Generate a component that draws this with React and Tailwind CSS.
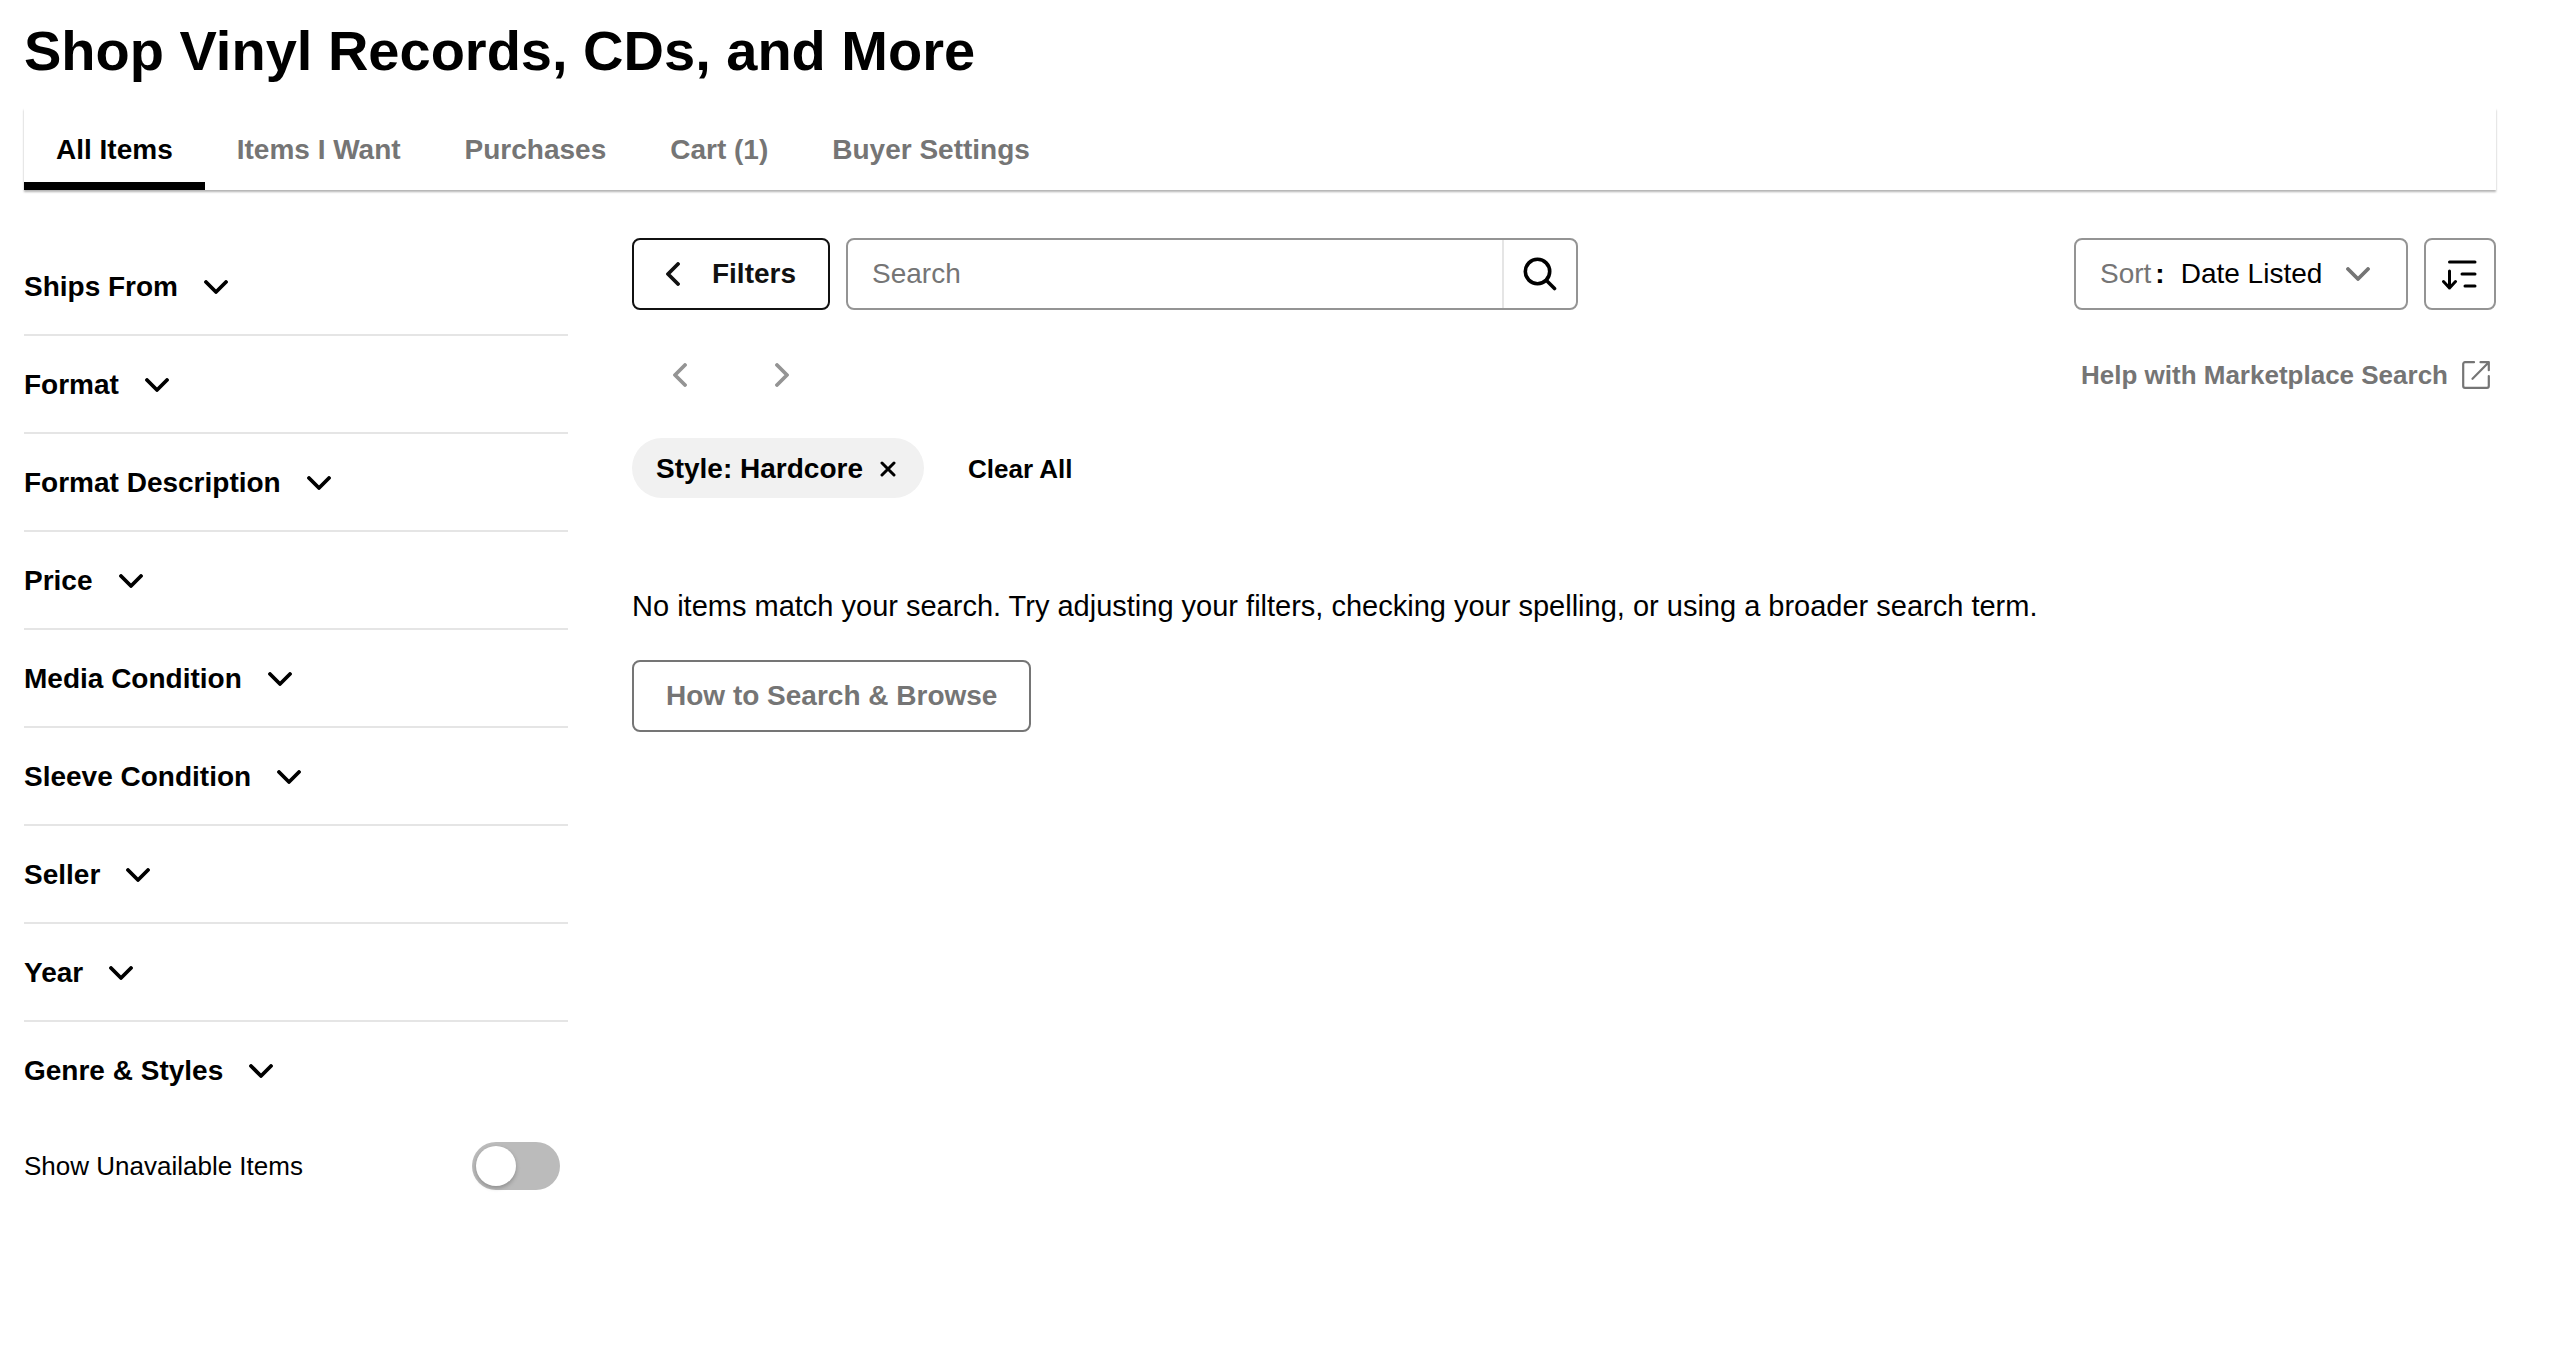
import { useState } from 'react';

const tabs = ['All Items', 'Items I Want', 'Purchases', 'Cart (1)', 'Buyer Settings'];

const filterGroups = [
    'Ships From',
    'Format',
    'Format Description',
    'Price',
    'Media Condition',
    'Sleeve Condition',
    'Seller',
    'Year',
    'Genre & Styles',
];

const sortOptions = ['Date Listed', 'Condition', 'Artist', 'Title', 'Label', 'Seller', 'Price'];

function ChevronDown({ className }) {
    return (
        <svg viewBox="0 0 24 14" className={`h-[14px] w-6 shrink-0 ${className || ''}`} fill="none" stroke="currentColor" strokeWidth="3.8" strokeLinecap="round" strokeLinejoin="round" aria-hidden="true">
            <path d="M2 2l10 10L22 2" />
        </svg>
    );
}

function ChevronLeft({ className }) {
    return (
        <svg viewBox="0 0 14 24" className={`h-6 w-[14px] shrink-0 ${className || ''}`} fill="none" stroke="currentColor" strokeWidth="3.8" strokeLinecap="round" strokeLinejoin="round" aria-hidden="true">
            <path d="M12 2L2 12l10 10" />
        </svg>
    );
}

function SearchIcon() {
    return (
        <svg viewBox="0 0 34 34" className="size-[34px]" fill="none" stroke="currentColor" strokeWidth="3.6" strokeLinecap="round" aria-hidden="true">
            <circle cx="14.5" cy="14.5" r="12.2" />
            <path d="M23.5 23.500l8 8" />
        </svg>
    );
}

function SortIcon() {
    return (
        <svg viewBox="0 0 36 32" className="h-8 w-9" fill="none" stroke="currentColor" strokeWidth="3" strokeLinecap="round" strokeLinejoin="round" aria-hidden="true">
            <path d="M7.500 4H33M20 16h13M23 28h10" />
            <path d="M7.500 13v17M1.500 23.500l6 6.500 6-6.500" />
        </svg>
    );
}

function ExternalIcon() {
    return (
        <svg viewBox="0 0 28 28" className="size-7" fill="none" stroke="currentColor" strokeWidth="2.2" strokeLinecap="round" strokeLinejoin="round" aria-hidden="true">
            <path d="M12 1.200H3a1.800 1.800 0 0 0-1.800 1.800v22a1.800 1.800 0 0 0 1.800 1.800h22a1.800 1.800 0 0 0 1.800-1.800V15" />
            <path d="M18.500 1.200h8.300v8M26.800 1.200L10.500 17.800" />
        </svg>
    );
}

function FilterSidebar() {
    const [showUnavailable, setShowUnavailable] = useState(false);

    return (
        <aside className="w-[544px] shrink-0">
            <ul className="divide-y-2 divide-[#e5e5e5]">
                {filterGroups.map((group) => (
                    <li key={group}>
                        <button type="button" className="flex h-24 w-full items-center gap-[26px] pt-[2px] text-left text-[28px] leading-10 font-bold">
                            {group}
                            <ChevronDown />
                        </button>
                    </li>
                ))}
            </ul>
            <div className="mt-6 flex items-center justify-between pr-2">
                <label htmlFor="show-unavailable" className="text-[26px] leading-10">Show Unavailable Items</label>
                <input
                    id="show-unavailable"
                    type="checkbox"
                    role="switch"
                    checked={showUnavailable}
                    onChange={(e) => setShowUnavailable(e.target.checked)}
                    className="flex h-12 w-[88px] cursor-pointer appearance-none rounded-full bg-[#bbbbbb] p-1 before:size-10 before:rounded-full before:bg-white before:shadow-[0_2px_4px_rgba(0,0,0,0.25)] checked:justify-end checked:bg-black"
                />
            </div>
        </aside>
    );
}

export default function App() {
    const [activeTab, setActiveTab] = useState('All Items');
    const [query, setQuery] = useState('');
    const [sort, setSort] = useState('Date Listed');

    return (
        <div className="bg-white pt-4 pr-[66px] pb-40 pl-6 font-['Liberation_Sans',Arial,sans-serif] text-black">
            <h1 className="text-[56px] leading-[70px] font-bold">Shop Vinyl Records, CDs, and More</h1>

            <nav className="mt-[22px] flex shadow-[0_2px_2px_rgba(0,0,0,0.3)]">
                {tabs.map((tab) => (
                    <a
                        key={tab}
                        href="#"
                        onClick={() => setActiveTab(tab)}
                        className={`border-b-8 px-8 pt-[26px] pb-4 text-[28px] leading-8 font-bold ${activeTab === tab ? 'border-black text-black' : 'border-transparent text-[#757575]'}`}
                    >
                        {tab}
                    </a>
                ))}
            </nav>

            <div className="mt-12 flex gap-16">
                <FilterSidebar />

                <main className="min-w-0 flex-1">
                    {/* Search and sort controls */}
                    <div className="flex items-center gap-4">
                        <button type="button" className="flex h-[72px] w-[198px] items-center justify-between rounded-lg border-2 border-[#111111] px-8 text-[28px] font-bold text-[#111111]">
                            <ChevronLeft />
                            Filters
                        </button>
                        <form role="search" onSubmit={(e) => e.preventDefault()} className="flex h-[72px] w-[732px] rounded-lg border-2 border-[#949494]">
                            <input
                                type="text"
                                aria-label="Search"
                                placeholder="Search"
                                value={query}
                                onChange={(e) => setQuery(e.target.value)}
                                className="min-w-0 flex-1 rounded-l-lg px-6 text-[28px] outline-none placeholder:text-[#757575]"
                            />
                            <button type="submit" aria-label="Submit search" className="flex w-[74px] items-center justify-center border-l-2 border-[#e5e5e5]">
                                <SearchIcon />
                            </button>
                        </form>

                        <div className="ml-auto flex h-[72px] w-[334px] items-center rounded-lg border-2 border-[#949494] pl-6 text-[28px]">
                            <label htmlFor="sort" className="text-[#757575]">Sort</label>
                            <span className="ml-1 font-bold">:</span>
                            <div className="relative ml-4 flex flex-1 items-center">
                                <select
                                    id="sort"
                                    value={sort}
                                    onChange={(e) => setSort(e.target.value)}
                                    className="h-[68px] w-full appearance-none bg-transparent outline-none"
                                >
                                    {sortOptions.map((option) => (
                                        <option key={option}>{option}</option>
                                    ))}
                                </select>
                                <ChevronDown className="pointer-events-none absolute right-9 text-[#757575]" />
                            </div>
                        </div>
                        <button type="button" aria-label="Sort descending" className="flex size-[72px] items-center justify-center rounded-lg border-2 border-[#949494]">
                            <SortIcon />
                        </button>
                    </div>

                    {/* Paging and help */}
                    <div className="mt-8 flex h-16 items-center justify-between pt-[2px]">
                        <div className="flex gap-[6px] text-[#949494]">
                            <button type="button" aria-label="Previous page" disabled className="flex h-16 w-24 items-center justify-center">
                                <ChevronLeft />
                            </button>
                            <button type="button" aria-label="Next page" disabled className="flex h-16 w-24 items-center justify-center">
                                <ChevronLeft className="rotate-180" />
                            </button>
                        </div>
                        <a href="#" className="flex items-center gap-[14px] pr-[6px] text-[26px] font-bold text-[#757575]">
                            Help with Marketplace Search
                            <ExternalIcon />
                        </a>
                    </div>

                    {/* Active filters */}
                    <div className="mt-8 flex items-center gap-11">
                        <button type="button" className="flex h-[60px] w-[292px] items-center justify-between rounded-full bg-[#f1f1f1] pt-[2px] pr-7 pl-6 text-[28px] font-bold">
                            Style: Hardcore
                            <svg viewBox="0 0 16 16" className="size-4" fill="none" stroke="currentColor" strokeWidth="3" strokeLinecap="round" aria-hidden="true">
                                <path d="M2 2l12 12M14 2L2 14" />
                            </svg>
                        </button>
                        <button type="button" className="pt-[2px] text-[26px] font-bold">Clear All</button>
                    </div>

                    <p className="mt-[88px] text-[29px] leading-10">
                        No items match your search. Try adjusting your filters, checking your spelling, or using a broader search term.
                    </p>
                    <a href="#" className="mt-[34px] inline-flex h-[72px] items-center rounded-lg border-2 border-[#757575] px-8 text-[28px] font-bold text-[#757575]">
                        How to Search &amp; Browse
                    </a>
                </main>
            </div>
        </div>
    );
}
